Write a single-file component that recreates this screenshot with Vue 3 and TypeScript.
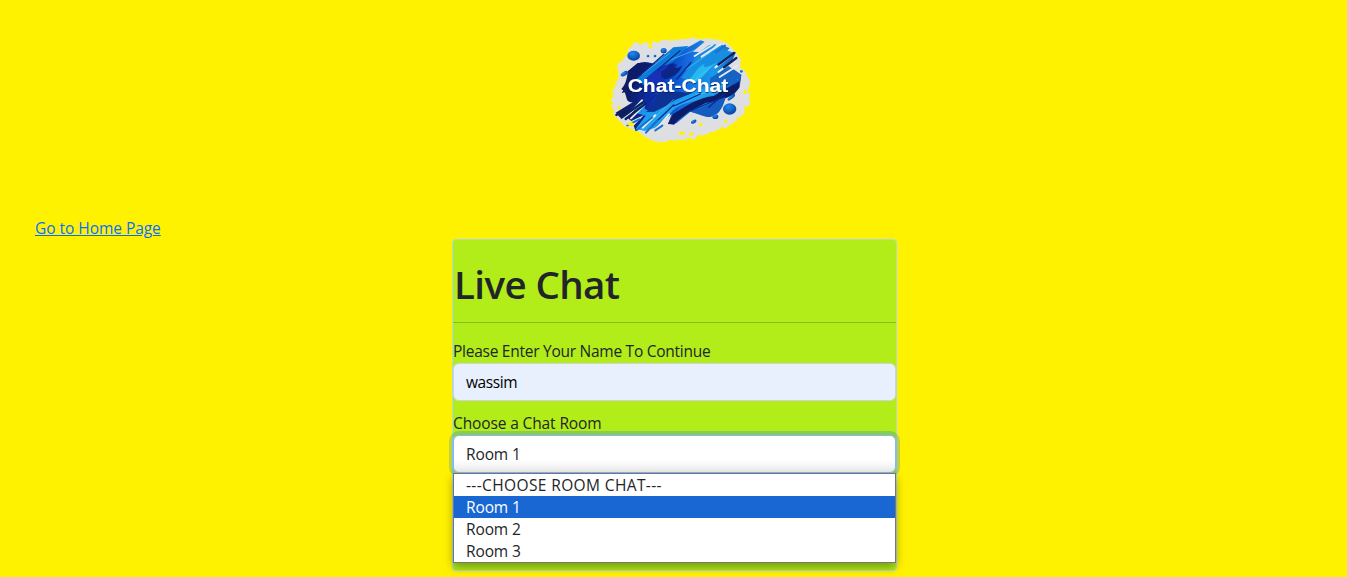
<script setup lang="ts">
import { ref } from 'vue'

const name = ref('wassim')
const selected = ref('Room 1')
const rooms: string[] = ['---CHOOSE ROOM CHAT---', 'Room 1', 'Room 2', 'Room 3']
</script>

<template>
  <main class="page">
    <header class="brand">
      <svg class="logo" viewBox="0 0 480 360" role="img" aria-label="Chat-Chat">
        <defs>
          <linearGradient id="paint" x1="80" y1="150" x2="420" y2="190" gradientUnits="userSpaceOnUse">
            <stop offset="0" stop-color="#101b5c" />
            <stop offset=".25" stop-color="#0b2fae" />
            <stop offset=".5" stop-color="#1267dc" />
            <stop offset=".75" stop-color="#149bea" />
            <stop offset="1" stop-color="#123e9c" />
          </linearGradient>
          <linearGradient id="cyan" x1="0" y1="0" x2="1" y2="1">
            <stop offset="0" stop-color="#0867cf" />
            <stop offset=".5" stop-color="#22a5f0" />
            <stop offset="1" stop-color="#0758bd" />
          </linearGradient>
          <radialGradient id="drop" cx=".4" cy=".3" r=".7">
            <stop offset="0" stop-color="#218af0" />
            <stop offset="1" stop-color="#0842a0" />
          </radialGradient>
          <filter id="shade" x="-10%" y="-20%" width="120%" height="150%">
            <feDropShadow dx="1" dy="3" stdDeviation="2" flood-color="#051347" flood-opacity=".8" />
          </filter>
          <filter id="soft"><feGaussianBlur stdDeviation="1.8" /></filter>
          <filter id="rough" x="-5%" y="-5%" width="110%" height="110%">
            <feTurbulence type="fractalNoise" baseFrequency=".07" numOctaves="2" seed="4" />
            <feDisplacementMap in="SourceGraphic" scale="17" />
          </filter>
        </defs>
        <path filter="url(#rough)" fill="#dedfe3" d="M104 39 145 41 185 31 246 28 278 25 338 27 375 35 400 57 420 84 422 115 438 125 449 151 446 193 450 213 436 248 406 274 387 287 344 302 320 312 282 325 241 330 165 335 142 325 111 304 77 291 41 254 35 208 37 182 57 140 51 103 74 82 84 56Z" />
        <g filter="url(#soft)">
          <path fill="url(#paint)" d="M64 177C83 157 77 137 90 122C108 100 126 90 153 99C181 109 198 79 221 73L270 49L302 31L314 35L278 65L299 66L328 45L350 43L329 65L366 44L389 55L371 73L408 66L397 91L380 105L402 119L424 134L419 172L401 195L371 207L357 247C331 266 295 252 271 245L229 280L204 283L215 252L167 291L129 290L107 304L101 287L132 255L94 273L83 264L107 236L61 263L47 248L98 217C69 216 88 193 64 177Z" />
          <path fill="#101c69" d="M83 124 113 99 157 101 216 90 170 122 110 159 89 181 65 190 80 162Z" />
          <path fill="#087bd8" d="M105 151 220 52 266 48 220 94 188 117 171 143 143 171Z" />
          <path fill="#1230b8" d="M133 150C160 125 180 105 202 104C216 98 223 102 232 104L214 140L167 164Z" />
          <path fill="#0b2685" d="M184 124C205 120 205 97 224 101C216 117 235 118 246 106C240 133 211 145 198 147L184 141Z" />
          <path fill="#168fe2" d="M243 144C263 116 277 107 284 85L333 55L365 47L340 72L377 60L401 68L372 89L346 103L319 133L288 155Z" />
          <path fill="#25b9ed" d="M260 155C285 135 288 112 314 101C302 121 334 106 344 101C324 121 311 143 285 157Z" />
          <path fill="#1264c4" d="M330 145 374 118 402 119 424 136 418 166 388 180 330 180Z" />
          <path fill="url(#cyan)" d="M103 238C115 228 124 220 142 218C116 245 159 247 180 229C213 196 247 187 286 183C320 166 358 182 370 155C371 188 337 202 305 207C260 219 232 223 211 250L165 293L136 303L107 297L137 257L109 249Z" />
          <path fill="#073294" d="M172 192C227 176 253 192 277 189L227 209L198 228L163 245L139 246L165 214Z" />
          <path fill="#0a1c66" d="M204 281 219 252C256 230 298 201 341 198L371 180L419 154L416 175L398 194L365 210L317 219L269 244L232 272 222 284Z" />
          <path fill="#125bc0" d="M261 243C306 240 323 218 377 201C371 226 361 252 332 261C312 264 291 247 261 243Z" />
          <g fill="none" stroke-linecap="round">
            <path stroke="#5fc4f0" stroke-width="2" d="M127 133 210 69M206 92 283 61M255 121 330 68M277 156 348 99M145 278 221 209M177 266 222 227M287 195 341 181" />
            <path stroke="#082a8c" stroke-width="4" d="M112 143 192 73M173 119 240 62M231 147 273 97M106 177 164 165M99 254 166 196M159 284 221 225M222 228 301 192M263 246 356 207M326 232 372 193" />
            <path stroke="#e6e8ee" stroke-width="6" d="M284 78 337 45M305 80 361 43M346 112 391 78M355 126 408 87M359 141 411 108M91 248 126 211M93 265 133 225M128 293 166 256M172 294 207 253" />
            <path stroke="#10205f" stroke-width="7" d="M355 104 402 69M372 112 409 84M49 255 80 236M65 263 127 218M77 267 137 221" />
            <path stroke="#1472cc" stroke-width="6" d="M82 286 118 268M111 299 157 262M138 308 172 271M166 301 187 287M347 67 375 47" />
          </g>
          <g fill="url(#drop)">
            <ellipse cx="101" cy="77" rx="19" ry="15" />
            <ellipse cx="191" cy="62" rx="9" ry="8" />
            <circle cx="144" cy="78" r="4" /><circle cx="165" cy="78" r="4" />
            <ellipse cx="73" cy="131" rx="12" ry="6" transform="rotate(-30 73 131)" />
            <ellipse cx="389" cy="237" rx="20" ry="17" />
            <ellipse cx="346" cy="260" rx="9" ry="7" />
            <ellipse cx="281" cy="275" rx="9" ry="5" transform="rotate(-25 281 275)" />
            <ellipse cx="394" cy="202" rx="14" ry="5" transform="rotate(-40 394 202)" />
            <circle cx="424" cy="124" r="4" /><circle cx="413" cy="151" r="5" />
          </g>
        </g>
        <g fill="#fff200">
          <path d="m50 231 8-4 5 6-8 7zM77 281l18-5 9 7-8 8zM233 312l13-9 11 6-8 7zM264 314l11-8 9 3-9 8zM296 282l7-5 5 9-8 5zM372 271l8-1 3 7-8 3zM429 185l7-6 6 8-6 7zM142 50l10-7 8 7-10 5z" />
        </g>
        <text class="logo-text" x="83" y="187" textLength="302" lengthAdjust="spacingAndGlyphs" filter="url(#shade)">Chat-Chat</text>
      </svg>
    </header>

    <nav class="nav"><a href="#">Go to Home Page</a></nav>

    <section class="card">
      <h1>Live Chat</h1>
      <hr />
      <label class="name-label" for="name">Please Enter Your Name To Continue</label>
      <input id="name" v-model="name" class="control name" type="text" />
      <label class="room-label">Choose a Chat Room</label>
      <div class="select">
        <div class="control focused">{{ selected }}</div>
        <ul class="menu">
          <li
            v-for="(room, i) in rooms"
            :key="room"
            :class="{ active: room === selected, prompt: i === 0 }"
            @click="selected = room"
          >{{ room }}</li>
        </ul>
      </div>
    </section>
  </main>
</template>

<style>
body {
  background: #fff200;
}
</style>

<style scoped>
.page {
  height: 577px;
  overflow: hidden;
  box-sizing: border-box;
  background: #fff200;
  color: #212529;
  font: 15.5px/24px "Segoe UI", "Open Sans", "Noto Sans", sans-serif;
}
.brand {
  height: 216px;
  box-sizing: border-box;
  padding: 30px 0 0 600px;
}
.logo {
  display: block;
  width: 160px;
  height: 120px;
}
.logo-text {
  fill: #fff;
  font: 700 54px "Liberation Sans", Arial, sans-serif;
}
.nav {
  height: 23px;
  padding-left: 35px;
  letter-spacing: -0.04px;
}
.nav a {
  color: #0d6efd;
  text-decoration: underline;
}
.card {
  width: 445px;
  height: 332px;
  box-sizing: border-box;
  margin-left: 452px;
  border: 1px solid #add8e6;
  border-radius: 4px;
  background: #b2ec19;
}
h1 {
  box-sizing: border-box;
  margin: 0;
  padding: 20px 0 0 1px;
  height: 82px;
  font-size: 38.5px;
  line-height: 48px;
  font-weight: 600;
  letter-spacing: -0.6px;
}
hr {
  margin: 0 0 16px;
  border: 0;
  height: 1px;
  background: #8db91d;
}
label {
  display: block;
  box-sizing: border-box;
  height: 24px;
  padding-top: 1px;
  line-height: 23px;
  white-space: nowrap;
}
.name-label {
  letter-spacing: -0.26px;
}
.control {
  display: block;
  box-sizing: border-box;
  width: 443px;
  height: 38px;
  padding: 6px 12px;
  border: 1px solid #ced4da;
  border-radius: 6px;
  background: #e8f0fe;
  color: #000;
  font: inherit;
  outline: none;
}
.name {
  letter-spacing: -0.4px;
}
.room-label {
  margin-top: 10px;
  letter-spacing: -0.12px;
}
.select {
  position: relative;
  letter-spacing: -0.12px;
}
.focused {
  border-color: #86b7fe;
  background: linear-gradient(#fff 65%, #ececec);
  box-shadow: 0 0 0 4px rgba(13, 110, 253, .25);
  color: #212529;
}
.menu {
  position: absolute;
  top: 38px;
  left: 0;
  box-sizing: border-box;
  width: 443px;
  height: 90px;
  margin: 0;
  padding: 0;
  list-style: none;
  border: 1px solid #767676;
  background: #fff;
  box-shadow: 0 4px 9px rgba(0, 0, 0, .35);
}
li {
  height: 22px;
  padding-left: 12px;
  line-height: 22px;
}
.prompt {
  letter-spacing: 0.38px;
}
.active {
  background: #1967d2;
  color: #fff;
}
</style>
